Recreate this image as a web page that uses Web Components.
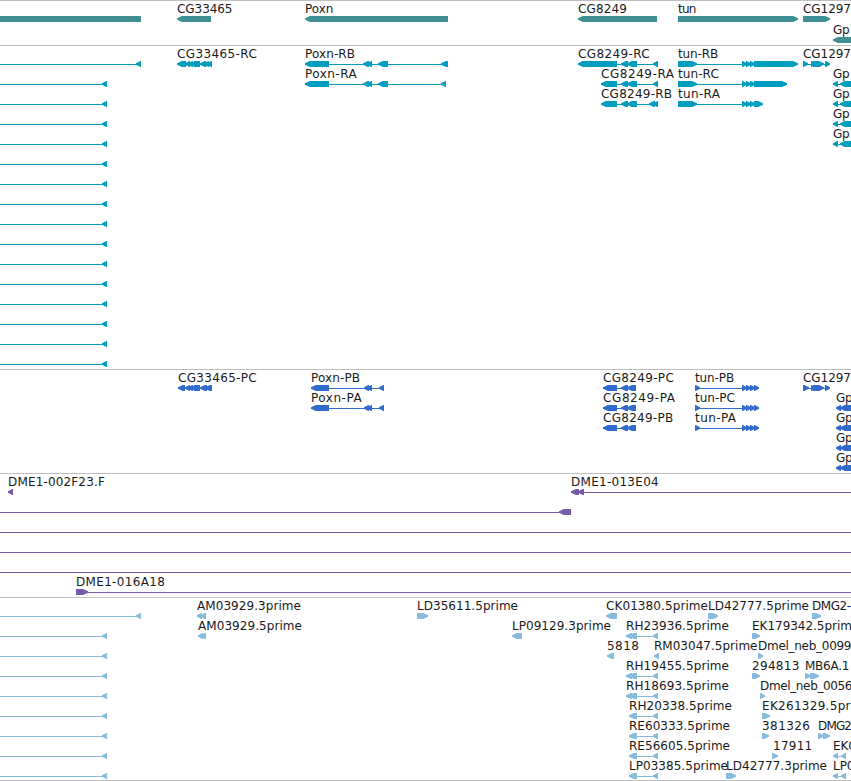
<!DOCTYPE html>
<html lang="en">
<head>
<meta charset="utf-8">
<title>Genome tracks</title>
<style>
html,body{margin:0;background:#fff}
body{width:851px;height:781px;overflow:hidden}
</style>
</head>
<body>
<genome-view></genome-view>
<script>
// One feature: optional label, optional intron line, and exon blocks with a pointed end.
// f = {x, t, w, l:[from,to], s:"<a-b >a-b ..."}
const featureSvg = f => {
  let out = '';
  if (f.l) out += `<rect x="${f.l[0]}" y="18" width="${f.l[1] - f.l[0]}" height="1" shape-rendering="crispEdges"/>`;
  for (const part of (f.s || '').split(' ').filter(Boolean)) {
    const [a, b] = part.slice(1).split('-').map(Number);
    const h = Math.min(5.5, b - a) - 0.7;
    out += part[0] === '<'
      ? `<path d="M${a} 17.2v1.6L${a + h} 21H${b}V15H${a + h}Z"/>`
      : part[0] === '>'
      ? `<path d="M${b} 17.2v1.6L${b - h} 21H${a}V15H${b - h}Z"/>`
      : `<path d="M${a} 15H${b}V21H${a}Z"/>`;
  }
  if (f.t) out += `<text x="${f.x}" y="12" textLength="${f.w - 0.5}" lengthAdjust="spacing">${f.t}</text>`;
  return out;
};

class TrackRow extends HTMLElement {
  set features(list) {
    const root = this.shadowRoot || this.attachShadow({mode: 'open'});
    root.innerHTML = `<style>
      :host{display:block;flex:0 0 var(--row,20px);height:var(--row,20px)}
      svg{display:block;width:851px;height:24px;overflow:visible;fill:currentColor}
      text{font:12px "DejaVu Sans",sans-serif;fill:#1a1a1a;white-space:pre}
    </style><svg viewBox="0 0 851 24">${list.map(featureSvg).join('')}</svg>`;
  }
}
customElements.define('track-row', TrackRow);

class GenomeTrack extends HTMLElement {
  constructor() {
    super();
    this.attachShadow({mode: 'open'}).innerHTML = `<style>
      :host{display:flex;flex-direction:column;box-sizing:border-box;border-top:1px solid #bebebe;flex:none}
    </style><slot></slot>`;
  }
}
customElements.define('genome-track', GenomeTrack);

const F = (x, t, w, s, l) => ({x, t, w, s, l});
const left = (n, s) => ({l: [0, n], s: s || `<${n - 5}-${n}`});

const genes = [
  [{s: '=0-141'}, F(177, 'CG33465', 56, '<177-211'), F(305, 'Poxn', 28.9, '<305-448'),
   F(578, 'CG8249', 49.5, '<578-657'), F(678, 'tun', 18.9, '>678-798'), F(803, 'CG1297', 48.5, '>803-830')],
  [F(833, 'Gp', 17, '<833-856')]
];

const gpR = F(833, 'Gp', 17, '<833-838 <840-856', [833, 851]);
const tunTail = ' >742-747 >746-751 >750-755 ';
const transcripts = [
  [left(141), F(177, 'CG33465-RC', 80.3, '<177-186 <185-190 <188-193 <191-196 =194-200 <200-206 <204-209 <207-212', [177, 212]),
   F(305, 'Poxn-RB', 50.5, '<305-329 <363-369 <367-372 <378-388 <441-448', [305, 448]),
   F(578, 'CG8249-RC', 72.2, '<578-617 <621-628 <627-637 <653-658', [578, 658]),
   F(678, 'tun-RB', 40.7, '>678-697' + tunTail + '=754-758 >754-798', [678, 798]),
   F(803, 'CG1297', 48.5, '>803-808 >811-815 >813-824 >825-830', [803, 830])],
  [left(107), F(305, 'Poxn-RA', 52.2, '<305-329 <363-369 <367-372 <378-388 <441-446', [305, 446]),
   F(601, 'CG8249-RA', 73.5, '<601-617 <621-628 <627-637 <653-658', [601, 658]),
   F(678, 'tun-RC', 41.3, '>678-697' + tunTail + '>754-787', [678, 787]), gpR],
  [left(107), F(601, 'CG8249-RB', 71.5, '<601-617 <621-628 <627-637 <649-655 <653-658', [601, 658]),
   F(678, 'tun-RA', 42.5, '>678-697' + tunTail + '>754-763', [678, 763]), gpR],
  [left(107), gpR], [left(107), gpR],
  ...Array.from({length: 11}, () => [left(107)])
];

const gpP = F(836, 'Gp', 17, '<836-841 <840-856', [836, 851]);
const poxP = '<311-329 <364-369 <367-372 <379-384';
const cgP = '<603-617 <621-628 <627-636';
const tunP = '>695-700' + tunTail + '>754-759';
const proteins = [
  [F(178, 'CG33465-PC', 79.2, '<178-185 <185-190 <188-193 <191-196 =194-200 <200-207 <205-212', [178, 212]),
   F(311, 'Poxn-PB', 49.5, poxP, [311, 384]), F(603, 'CG8249-PC', 71.3, cgP, [603, 636]),
   F(695, 'tun-PB', 39.7, tunP, [695, 759]), F(803, 'CG1297', 48.5, '>803-809 >811-815 >813-824 >825-830', [803, 830])],
  [F(311, 'Poxn-PA', 51.2, poxP, [311, 384]), F(603, 'CG8249-PA', 72.5, cgP, [603, 636]),
   F(695, 'tun-PC', 40.5, tunP, [695, 759]), gpP],
  [F(603, 'CG8249-PB', 70.7, cgP, [603, 636]), F(695, 'tun-PA', 41.5, tunP, [695, 759]), gpP],
  [gpP], [gpP]
];

const clones = [
  [F(8, 'DME1-002F23.F', 97.3, '<8-13'), F(571, 'DME1-013E04', 88.2, '<571-579 <578-584', [571, 851])],
  [left(571, '<559-571')],
  [{l: [0, 851]}], [{l: [0, 851]}], [{l: [0, 851]}],
  [F(76, 'DME1-016A18', 89.3, '>76-88', [76, 851])]
];

const rh = '<626-632 <629-637 <653-658', re = '<629-637 <653-658';
const ends = '<833-838 <841-846';
const ests = [
  [left(141), F(197, 'AM03929.3prime', 104.5, '<197-202 <200-206'), F(417, 'LD35611.5prime', 101.5, '>417-428'),
   F(606, 'CK01380.5prime', 102.5, '<606-617'), F(708, 'LD42777.5prime', 101.5, '>708-718'), F(812, 'DMG2-', 39.5, '>812-821')],
  [left(107), F(198, 'AM03929.5prime', 104.5, '<198-203 <200-206'), F(512, 'LP09129.3prime', 99.5, '<512-522'),
   F(626, 'RH23936.5prime', 103.5, rh, [626, 658]), F(752, 'EK179342.5prim', 100.5, '>752-760')],
  [left(107), F(607, '5818', 32.5, '<607-614'), F(654, 'RM03047.5prime', 104, '<654-659'), F(758, 'Dmel_neb_0099', 94, '>758-763')],
  [left(107), F(626, 'RH19455.5prime', 103.5, rh, [626, 658]), F(752, '294813', 47.9, '>752-760'), F(805, 'MB6A.1', 44.9, '>805-811 >810-819')],
  [left(107), F(626, 'RH18693.5prime', 103.5, rh, [626, 658]), F(760, 'Dmel_neb_0056', 93, '>760-765')],
  [left(107), F(629, 'RH20338.5prime', 103.5, re, [629, 658]), F(762, 'EK261329.5pr', 89, '>762-770')],
  [left(107), F(629, 'RE60333.5prime', 101.5, re, [629, 658]), F(762, '381326', 48.5, '>762-769'), F(818, 'DMG2', 34.5, '>818-824 >823-830')],
  [left(107), F(629, 'RE56605.5prime', 101.5, re, [629, 658]), F(773, '17911', 39.7, '>772-778'), F(833, 'EK0', 23.5, ends, [833, 846])],
  [left(107), F(629, 'LP03385.5prime', 99.5, re, [629, 658]), F(726, 'LD42777.3prime', 101.5, '>726-736'), F(833, 'LP0', 22, ends, [833, 846])]
];

const tracks = [
  {h: 45, c: '#408f94', rows: genes, row: 21},
  {h: 324, c: '#009dbe', rows: transcripts},
  {h: 104, c: '#326ccb', rows: proteins},
  {h: 124, c: '#775ba9', rows: clones},
  {h: 183, c: '#87bcdd', rows: ests}
];

class GenomeView extends HTMLElement {
  connectedCallback() {
    const root = this.attachShadow({mode: 'open'});
    root.innerHTML = `<style>
      :host{display:flex;flex-direction:column;box-sizing:border-box;width:851px;height:781px;overflow:hidden;background:#fff;border-bottom:1px solid #bebebe}
    </style>`;
    for (const t of tracks) {
      const el = document.createElement('genome-track');
      el.style.cssText = `height:${t.h}px;color:${t.c};--row:${t.row || 20}px`;
      for (const r of t.rows) {
        const row = document.createElement('track-row');
        row.features = r;
        el.append(row);
      }
      root.append(el);
    }
  }
}
customElements.define('genome-view', GenomeView);
</script>
</body>
</html>
